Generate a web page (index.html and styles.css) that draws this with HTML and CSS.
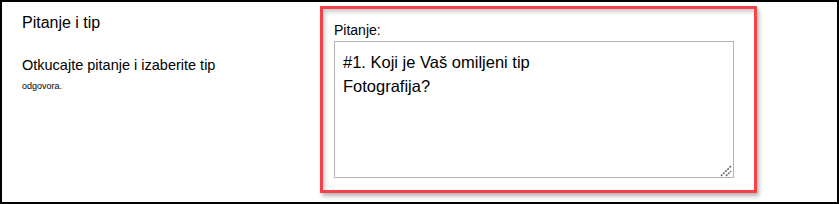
FILE: index.html
```html
<!DOCTYPE html>
<html lang="hr">
<head>
  <meta charset="UTF-8" />
  <meta name="viewport" content="width=device-width, initial-scale=1" />
  <title>Pitanje i tip</title>
  <link rel="stylesheet" href="styles.css">
</head>
<body>
  <div class="panel">
    <div class="intro">
      <h2>Pitanje i tip</h2>
      <p class="hint">Otkucajte pitanje i izaberite tip</p>
      <p class="hint-small">odgovora.</p>
    </div>

    <div class="question-box">
      <label for="question">Pitanje:</label>
      <div class="field">
        <textarea id="question">#1. Koji je Vaš omiljeni tip
Fotografija?</textarea>
        <!-- resize grip -->
        <svg class="grip" width="12" height="12" viewBox="0 0 12 12">
          <path d="M1 11 L11 1 M6 11 L11 6" stroke="#5a5a5a" stroke-width="1.4" stroke-dasharray="2 1" fill="none" />
        </svg>
      </div>
    </div>
  </div>
</body>
</html>
```

FILE: styles.css
```css
/* Reset */
* {
  margin: 0; padding: 0; box-sizing: border-box;
  font-family: "Liberation Sans", Arial, sans-serif;
}
body {
  background: #fff;
  color: #000;
}
/* Outer panel */
.panel {
  width: 839px;
  height: 204px;
  border: 2px solid #000;
  display: grid;
  grid-template-columns: 318px 437px;
  align-items: start;
}
/* Left column */
.intro {
  padding: 12px 0 0 20px;
}
.intro h2 {
  font-size: 16px;
  font-weight: normal;
  line-height: 18px;
  margin-bottom: 25px;
}
.hint {
  font-size: 14.5px;
  line-height: 17px;
  margin-bottom: 7px;
}
.hint-small {
  font-size: 9px;
  line-height: 10px;
}
/* Highlighted question box */
.question-box {
  margin-top: 4px;
  width: 437px;
  height: 187px;
  border: 3px solid #f54449;
  box-shadow: 2px 3px 4px rgba(0, 0, 0, 0.3), inset 2px 3px 4px rgba(0, 0, 0, 0.2);
  padding: 13px 0 0 11px;
}
.question-box label {
  display: block;
  font-size: 14px;
  line-height: 16px;
  margin-bottom: 3px;
}
.field {
  position: relative;
  width: 400px;
}
.field textarea {
  display: block;
  width: 400px;
  height: 137px;
  border: 1px solid #b4b4b4;
  padding: 8px 8px;
  font-size: 16.5px;
  line-height: 24px;
  color: #000;
  background: #fff;
  resize: none;
  outline: none;
}
.grip {
  position: absolute;
  right: 2px;
  bottom: 1px;
}
```
